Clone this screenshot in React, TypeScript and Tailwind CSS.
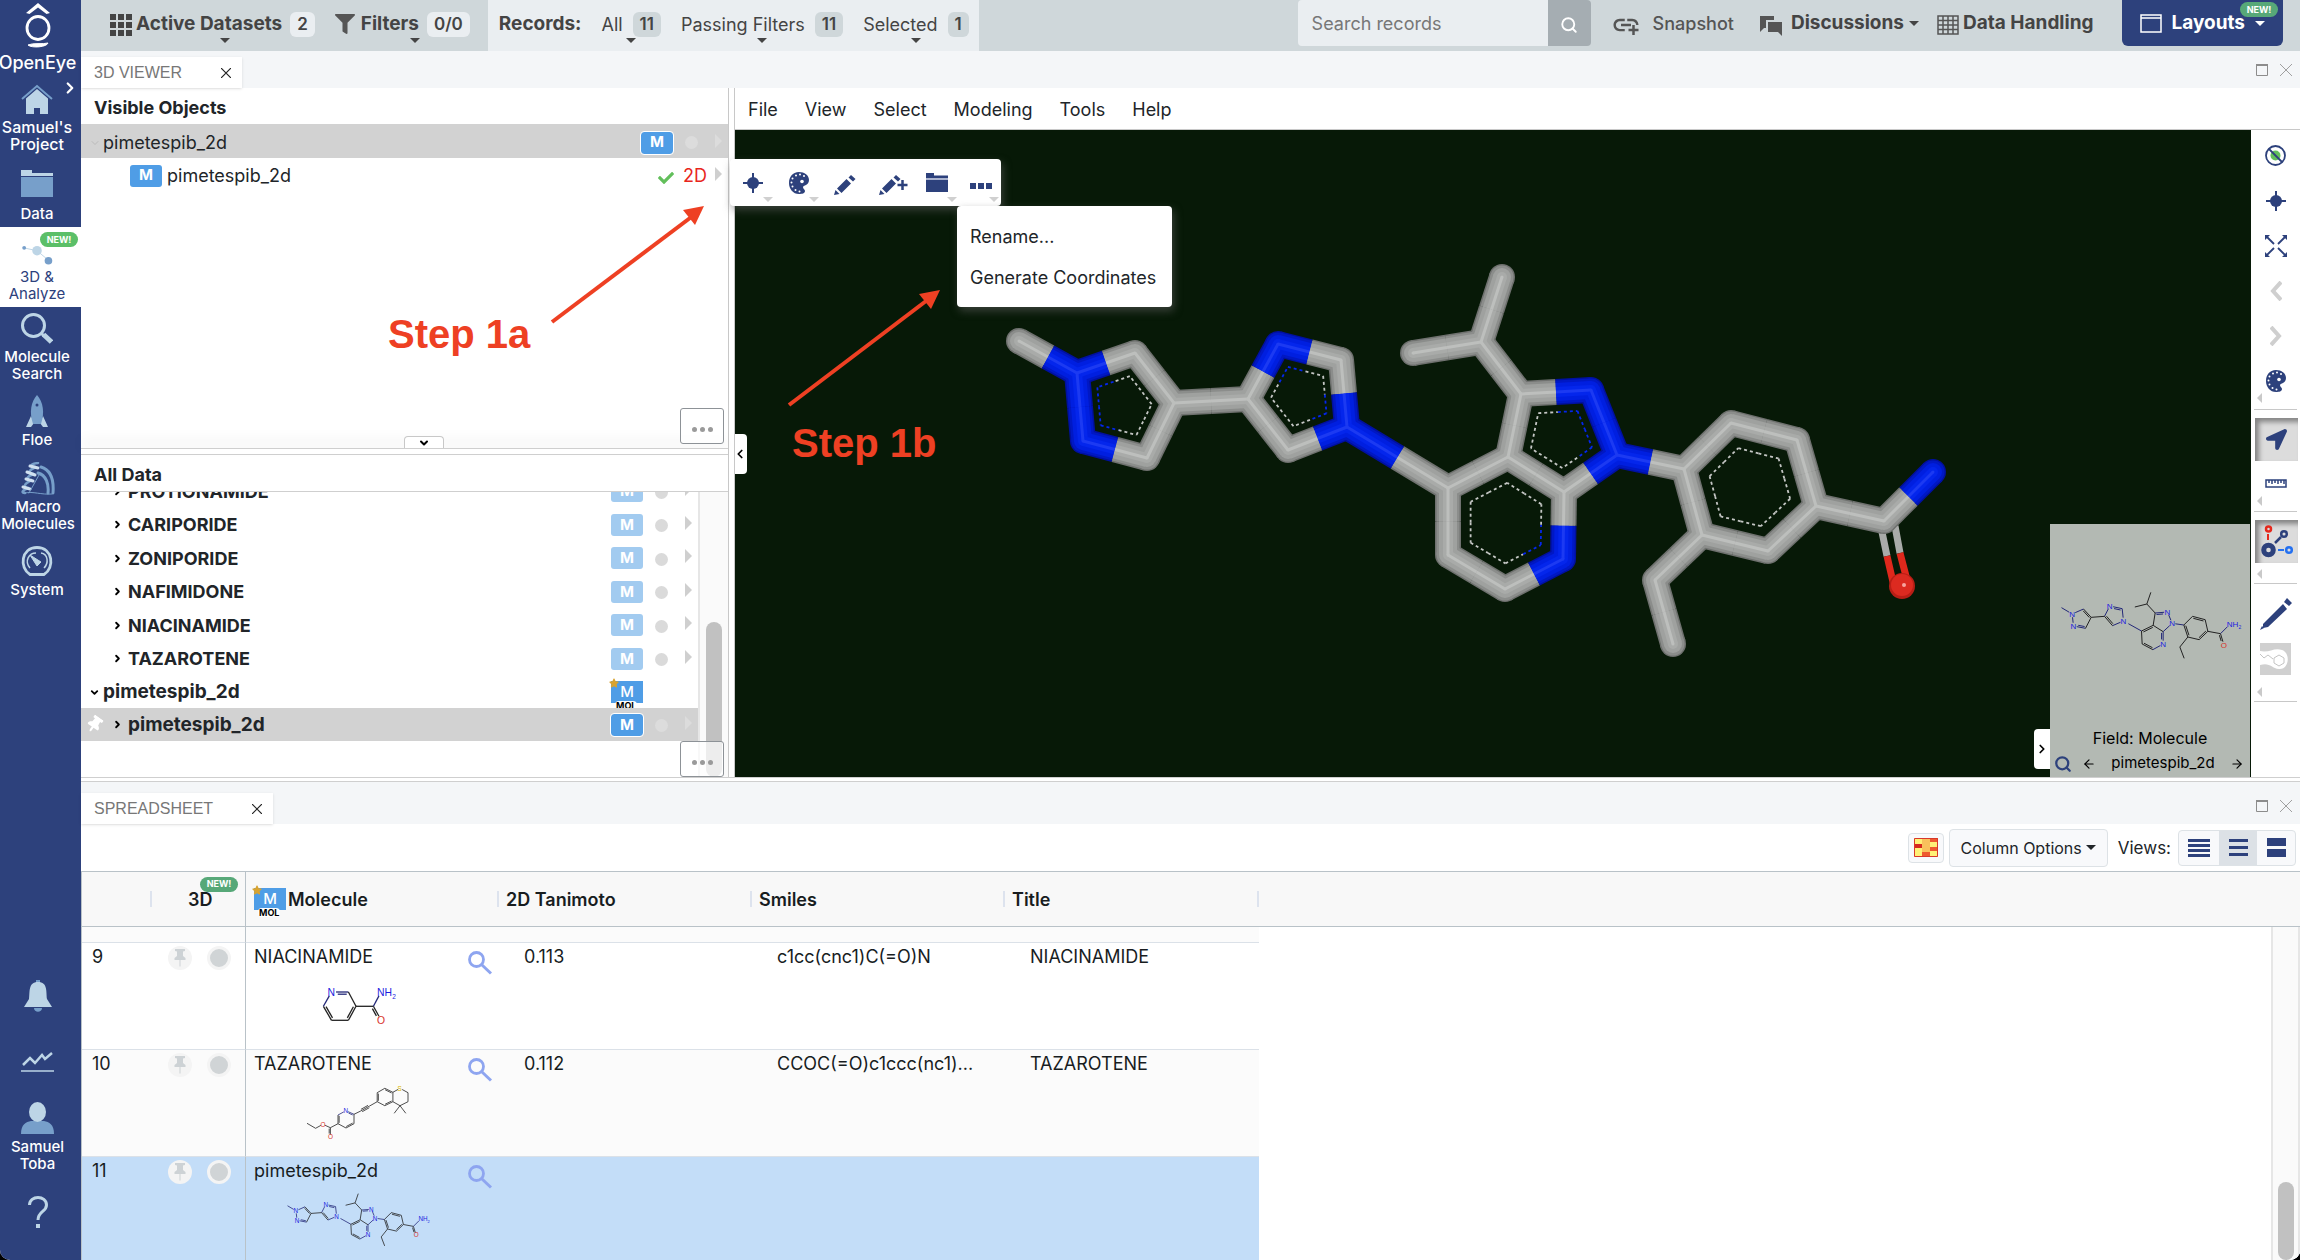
import type { ReactNode } from 'react';
import { ChevronDown, ChevronLeft, ChevronRight, Search, ArrowLeft, ArrowRight } from 'lucide-react';
import { FaCheck, FaFilter, FaLocationArrow, FaStar, FaThumbtack } from 'react-icons/fa';
import { MdAddLink } from 'react-icons/md';

type Atom = [x: number, y: number, label?: string];
type Bond = [from: number, to: number, order?: number];

interface Structure {
  viewBox: string;
  atoms: Atom[];
  bonds: Bond[];
}

const pimetespib: Structure = {
  viewBox: '86 746 548 216',
  atoms: [
    [93, 802], [125, 821, 'N'], [129, 857, 'N'], [165, 864], [182, 831], [159, 806],
    [222, 828], [238, 797, 'N'], [275, 805], [279, 842, 'N'], [246, 856],
    [333, 872], [335, 911], [367, 928], [398, 911, 'N'], [398, 874], [368, 855],
    [374, 818], [411, 815, 'N'], [425, 849, 'N'], [349, 791], [361, 756], [313, 800],
    [460, 854], [486, 828], [524, 838], [532, 873], [506, 898], [472, 890],
    [448, 920], [461, 954], [570, 880], [598, 852, 'NH2'], [580, 913, 'O'],
  ],
  bonds: [
    [0, 1], [1, 2], [2, 3, -2], [3, 4], [4, 5, -2], [5, 1], [4, 6],
    [6, 7], [7, 8, 2], [8, 9], [9, 10], [10, 6, 2], [9, 11],
    [11, 12], [12, 13, -2], [13, 14], [14, 15, -2], [15, 16], [16, 11, -2],
    [16, 17], [17, 18, 2], [18, 19], [19, 15], [17, 20], [20, 21], [20, 22], [19, 23],
    [23, 24], [24, 25, 2], [25, 26], [26, 27, 2], [27, 28], [28, 23, 2],
    [28, 29], [29, 30], [26, 31], [31, 32], [31, 33, 2],
  ],
};

const niacinamide: Structure = {
  viewBox: '318 204 76 44',
  atoms: [
    [329.5, 212, 'N'], [346.4, 212], [354, 226.3], [346.4, 240.3], [329.5, 240.3], [321.4, 226.3],
    [371.4, 226.3], [379, 240, 'O'], [379, 212, 'NH2'],
  ],
  bonds: [[0, 1, 2], [1, 2], [2, 3, 2], [3, 4], [4, 5, 2], [5, 0], [2, 6], [6, 7, 2], [6, 8]],
};

const tazarotene: Structure = {
  viewBox: '304 302 108 61',
  atoms: [
    [307, 343.3], [315.6, 348.3], [322.8, 344.3, 'O'], [330.4, 347.7], [330.4, 357, 'O'],
    [338, 343.7], [338, 335], [346, 330.7, 'N'], [354, 334.3], [354, 343.7], [346, 348],
    [360.7, 331], [369.6, 326], [377.2, 321.7], [377.2, 312.7], [384.8, 308.3],
    [392.9, 312.3], [392.9, 321.7], [384.8, 325.7], [400, 308.3, 'S'], [408, 312.7],
    [408, 321.7], [400, 325.7], [394.2, 333.3], [405.8, 333.3],
  ],
  bonds: [
    [0, 1], [1, 2], [2, 3], [3, 4, 2], [3, 5], [5, 6, 2], [6, 7], [7, 8, 2], [8, 9], [9, 10, 2],
    [10, 5], [8, 11], [11, 12, 3], [12, 13], [13, 14, 2], [14, 15], [15, 16, 2], [16, 17],
    [17, 18, 2], [18, 13], [16, 19], [19, 20], [20, 21], [21, 22], [22, 17], [22, 23], [22, 24],
  ],
};

const labelColor: Record<string, string> = { N: '#1c1ce0', NH2: '#1c1ce0', O: '#d8322a', S: '#d8b400' };

interface StructureViewProps {
  structure: Structure;
  unit: number;
  className: string;
}

// unit is the size of one screen pixel in the structure's own coordinates
function StructureView({ structure, unit, className }: StructureViewProps) {
  const { atoms, bonds, viewBox } = structure;

  return (
    <svg viewBox={viewBox} className={className} aria-hidden="true">
      {bonds.map(([from, to, order = 1]) => {
        const [ax, ay, aLabel] = atoms[from];
        const [bx, by, bLabel] = atoms[to];
        const length = Math.hypot(bx - ax, by - ay);
        const ux = (bx - ax) / length;
        const uy = (by - ay) / length;
        const trimA = aLabel ? length * 0.27 : 0;
        const trimB = bLabel ? length * 0.27 : 0;
        const side = Math.sign(order);
        const offsets = Math.abs(order) === 3 ? [-1, 0, 1] : Math.abs(order) === 2 ? [0, side] : [0];
        const nitrogen = (aLabel && aLabel[0] === 'N') || (bLabel && bLabel[0] === 'N');

        return offsets.map((offset) => {
          const shift = offset * length * 0.13;
          const inset = offset ? length * 0.1 : 0;
          return (
            <line
              key={`${from}-${to}-${offset}`}
              x1={ax + ux * (trimA + inset) - uy * shift}
              y1={ay + uy * (trimA + inset) + ux * shift}
              x2={bx - ux * (trimB + inset) - uy * shift}
              y2={by - uy * (trimB + inset) + ux * shift}
              stroke={nitrogen ? '#232878' : '#222'}
              strokeWidth={unit}
            />
          );
        });
      })}
      {atoms.map(([x, y, label], index) => label && (
        <text
          key={index}
          x={x - unit * 3}
          y={y + unit * 3}
          fill={labelColor[label]}
          fontSize={unit * 8}
          className="font-['Liberation_Sans',Arial,sans-serif]"
        >
          {label[0]}
          {label === 'NH2' && <>H<tspan fontSize={unit * 5} dy={unit * 2}>2</tspan></>}
        </text>
      ))}
    </svg>
  );
}

// Stick model, x / y / element
const sticks: [number, number, string][] = [
  [1019, 341, 'C'], [1077, 373, 'N'], [1083, 441, 'N'], [1147, 458, 'C'], [1174, 403, 'C'], [1135, 353, 'C'],
  [1248, 399, 'C'], [1278, 344, 'N'], [1341, 360, 'C'], [1347, 427, 'N'], [1288, 450, 'C'],
  [1448, 488, 'C'], [1448, 555, 'C'], [1505, 589, 'C'], [1563, 559, 'N'], [1564, 492, 'C'], [1508, 457, 'C'],
  [1521, 394, 'C'], [1591, 390, 'N'], [1617, 455, 'N'], [1481, 342, 'C'], [1502, 277, 'C'], [1413, 353, 'C'],
  [1684, 469, 'C'], [1731, 423, 'C'], [1797, 440, 'C'], [1816, 506, 'C'], [1768, 551, 'C'], [1702, 535, 'C'],
  [1655, 580, 'C'], [1673, 644, 'C'], [1884, 521, 'C'], [1933, 472, 'N'],
];

const stickBonds: [number, number][] = [
  [0, 1], [1, 2], [2, 3], [3, 4], [4, 5], [5, 1], [4, 6], [6, 7], [7, 8], [8, 9], [9, 10], [10, 6], [9, 11],
  [11, 12], [12, 13], [13, 14], [14, 15], [15, 16], [16, 11], [16, 17], [17, 18], [18, 19], [19, 15],
  [17, 20], [20, 21], [20, 22], [19, 23], [23, 24], [24, 25], [25, 26], [26, 27], [27, 28], [28, 23],
  [28, 29], [29, 30], [26, 31], [31, 32],
];

const rings = [[1, 2, 3, 4, 5], [6, 7, 8, 9, 10], [11, 12, 13, 14, 15, 16], [15, 16, 17, 18, 19], [23, 24, 25, 26, 27, 28]];

const stickLayers = [
  { width: 26, C: '#6f716f', N: '#0010a0' },
  { width: 23, C: '#8b8d8b', N: '#0018c4' },
  { width: 18, C: '#9fa19f', N: '#001fe0' },
  { width: 10, C: '#a9aba9', N: '#0426ec' },
  { width: 3, C: '#bdbfbd', N: '#1c3af2' },
];

function StickModel() {
  return (
    <svg viewBox="735 130 1516 647" className="h-full w-full" aria-hidden="true">
      <g strokeWidth="7" stroke="#a9aba9">
        <path d="M1882 532 1887 556M1895 526 1900 553" />
        <path d="M1887 556 1893 582M1900 553 1907 580" stroke="#e0281c" />
      </g>
      {stickLayers.map((layer) => (
        <g key={layer.width} strokeWidth={layer.width}>
          {stickBonds.map(([from, to]) => {
            const [ax, ay, a] = sticks[from];
            const [bx, by, b] = sticks[to];
            const mx = (ax + bx) / 2;
            const my = (ay + by) / 2;
            return (
              <g key={`${from}-${to}`}>
                <line x1={ax} y1={ay} x2={mx} y2={my} stroke={a === 'N' ? layer.N : layer.C} />
                <line x1={bx} y1={by} x2={mx} y2={my} stroke={b === 'N' ? layer.N : layer.C} />
              </g>
            );
          })}
          {sticks.map(([x, y, element], index) => (
            <circle key={index} cx={x} cy={y} r={layer.width / 2} strokeWidth="0" fill={element === 'N' ? layer.N : layer.C} />
          ))}
        </g>
      ))}
      {rings.map((ring) => {
        const cx = ring.reduce((sum, i) => sum + sticks[i][0], 0) / ring.length;
        const cy = ring.reduce((sum, i) => sum + sticks[i][1], 0) / ring.length;
        const scale = ring.length === 5 ? 0.56 : 0.61;
        const points = ring.map((i) => [cx + (sticks[i][0] - cx) * scale, cy + (sticks[i][1] - cy) * scale]);
        return points.map(([x, y], k) => {
          const [nx, ny] = points[(k + 1) % points.length];
          const mx = (x + nx) / 2;
          const my = (y + ny) / 2;
          const next = ring[(k + 1) % ring.length];
          return (
            <g key={`${ring[0]}-${k}`} strokeWidth="1.800" strokeDasharray="3 3">
              <line x1={x} y1={y} x2={mx} y2={my} stroke={sticks[ring[k]][2] === 'N' ? '#0426ec' : '#c4c6c4'} />
              <line x1={mx} y1={my} x2={nx} y2={ny} stroke={sticks[next][2] === 'N' ? '#0426ec' : '#c4c6c4'} />
            </g>
          );
        });
      })}
      <circle cx="1902" cy="586" r="13" fill="#b81e16" />
      <circle cx="1902" cy="585" r="11" fill="#dc2a20" />
      <circle cx="1904" cy="585" r="2" fill="#f7a49e" />
    </svg>
  );
}

function PaletteIcon() {
  return (
    <svg viewBox="0 0 22 22" className="size-[22px]" fill="#2d417c">
      <path d="M11 0C4.500 0 1 5 1 11s4 11 10 11c3 0 6-.6 6-3 0-1.600-2-2.200-2-3.800 0-2 6-1.700 6-7.200C21 3 16.500 0 11 0Z" />
      <g fill="#fff">
        <circle cx="14" cy="9.500" r="1.800" />
        <circle cx="8" cy="3.500" r="1" />
        <circle cx="12" cy="2.500" r="1" />
        <circle cx="16" cy="4" r="1" />
        <circle cx="4.500" cy="6.500" r="1" />
        <circle cx="3.500" cy="10.500" r="1" />
        <circle cx="4.500" cy="14.500" r="1" />
        <circle cx="7.500" cy="18" r="1" />
        <circle cx="11.500" cy="19.500" r="1" />
      </g>
    </svg>
  );
}

function TargetIcon() {
  return (
    <svg viewBox="0 0 20 20" className="size-5" fill="#2d417c">
      <circle cx="10" cy="10" r="6" />
      <path d="M10 0v20M0 10h20" stroke="#2d417c" strokeWidth="2" />
    </svg>
  );
}

function PencilIcon({ plus = false }: { plus?: boolean }) {
  return (
    <svg viewBox={plus ? '-4 -4 33 26' : '-2 -4 26 26'} className={plus ? 'h-[26px] w-[33px]' : 'size-[26px]'} fill="#2d417c">
      <path d="M0 21 1.500 16 5.500 20ZM3 14.500 12.500 5 17 9.500 7.500 19ZM14.500 3.500 17 1 21.500 5 19 7.500Z" />
      {plus && <path d="M23.500 6v10M18.500 11h10" stroke="#2d417c" strokeWidth="2.500" />}
    </svg>
  );
}

function FolderIcon() {
  return (
    <svg viewBox="0 0 22 19" className="h-[19px] w-[22px]" fill="#2d417c">
      <path d="M0 0h8v2.500h14V5H0ZM0 7h22v12H0Z" />
      <path d="M0 5h22v2H0Z" fill="#aab3cf" />
    </svg>
  );
}

function LensIcon() {
  return (
    <svg viewBox="0 0 24 24" className="mt-2 size-6 shrink-0" fill="none" stroke="#8ea5f0">
      <circle cx="8.500" cy="8.500" r="7" strokeWidth="2.800" />
      <path d="M13.500 13.500 23 22.500" strokeWidth="3" />
    </svg>
  );
}

function PinIcon() {
  return (
    <svg viewBox="0 0 12 18" className="h-[18px] w-3" fill="#cdd2d5">
      <path d="M1 0H11V2L9 2.500V7L11.500 9V11H6.500V17L6 18 5.500 17V11H.5V9L3 7V2.500L1 2Z" />
    </svg>
  );
}

function SpinDown({ className }: { className: string }) {
  return (
    <svg viewBox="0 0 10 5" className={`h-[5px] w-[10px] ${className}`} fill="currentColor">
      <path d="M0 0h10L5 5Z" />
    </svg>
  );
}

function NewBadge({ className }: { className: string }) {
  return (
    <span className={`flex h-[15px] w-[38px] items-center justify-center rounded-full text-[9px] font-bold text-white ${className}`}>
      NEW!
    </span>
  );
}

function MBadge({ tone = 'bg-[#4f9de6]', outlined = false }: { tone?: string; outlined?: boolean }) {
  return (
    <span
      className={`flex h-[22px] w-8 shrink-0 items-center justify-center rounded-[3px] text-[15px] font-bold text-white ${tone} ${
        outlined ? 'outline outline-white' : ''
      }`}
    >
      M
    </span>
  );
}

function MolBadge() {
  return (
    <span className="relative flex h-[22px] w-8 shrink-0 items-center justify-center bg-[#4f9de6] text-[15px] font-medium text-white">
      M
      <FaStar className="absolute -left-[2px] -top-[3px] size-[10px] text-[#d9a32f]" />
      <span className="absolute -bottom-[7px] left-1 rounded-sm bg-white px-[1px] text-[9px] font-bold leading-[9px] text-black">MOL</span>
    </span>
  );
}

function RowArrow({ className }: { className: string }) {
  return (
    <svg viewBox="0 0 7 14" className={`mb-1 h-[14px] w-[7px] ${className}`} fill="currentColor">
      <path d="M0 0 7 7 0 14Z" />
    </svg>
  );
}

interface NavItemProps {
  icon: ReactNode;
  lines?: string[];
  label: string;
  className: string;
}

function NavItem({ icon, lines = [], label, className }: NavItemProps) {
  return (
    <a href="#" aria-label={label} className={`relative flex flex-col items-center text-center leading-[17px] ${className}`}>
      {icon}
      {lines.map((line) => <span key={line}>{line}</span>)}
    </a>
  );
}

function Sidebar() {
  return (
    <nav className="flex w-[81px] shrink-0 flex-col bg-[#2d417c] text-[15px] font-medium text-white">
      <a href="#" className="flex flex-col items-center pr-[6px] pt-[3px] text-[18px] leading-[22px]">
        <svg viewBox="0 0 26 45" className="mb-1 h-[45px] w-[26px]" fill="none" stroke="#fff">
          <path d="M1 10 13 0 25 10 21.500 11 13 4.500 4.500 11Z" fill="#fff" stroke="none" />
          <ellipse cx="13" cy="25" rx="11" ry="11.500" strokeWidth="2.800" />
          <path d="M3 42C8 39.500 18 41.500 23 40 22 44 7 45.500 3 42Z" fill="#fff" />
        </svg>
        OpenEye
      </a>
      <NavItem
        label="Samuel's Project"
        className="pr-[7px] pt-[10px] text-[16px]"
        lines={["Samuel's", 'Project']}
        icon={
          <>
            <svg viewBox="0 0 32 30" className="mb-[5px] h-[30px] w-8">
              <path d="M5 14.500 16 5 27 14.500V30H19V24H13V30H5Z" fill="#bdd5e6" />
              <path d="M1 15 16 2 31 15" fill="none" stroke="#779fca" strokeWidth="2" />
            </svg>
            <ChevronRight className="absolute right-[2px] top-[5px] size-[18px]" strokeWidth={3} />
          </>
        }
      />
      <NavItem
        label="Data"
        className="pb-[5px] pr-[7px] pt-[17px]"
        lines={['Data']}
        icon={
          <svg viewBox="0 0 32 27" className="mb-2 h-[27px] w-8">
            <path d="M0 0H11V3H32V6H0Z" fill="#bdd5e6" />
            <path d="M0 7H32V27H0Z" fill="#779fca" />
          </svg>
        }
      />
      <NavItem
        label="3D & Analyze"
        className="bg-white pb-[5px] pr-[7px] pt-[18px] font-normal text-[#2d417c]"
        lines={['3D &', 'Analyze']}
        icon={
          <>
            <svg viewBox="0 0 33 21" className="mb-[3px] h-[20px] w-[33px]">
              <path d="M2 3 16 6 28 16" fill="none" stroke="#bdd5e6" />
              <circle cx="2.500" cy="3" r="2" fill="#779fca" />
              <circle cx="16" cy="6" r="5" fill="#bdd5e6" />
              <circle cx="28" cy="16.500" r="4" fill="#779fca" />
            </svg>
            <NewBadge className="absolute right-[3px] top-[5px] bg-[#5bbf68]" />
          </>
        }
      />
      <NavItem
        label="Molecule Search"
        className="pr-[7px] pt-[6px]"
        lines={['Molecule', 'Search']}
        icon={
          <svg viewBox="0 0 32 31" className="mb-1 h-[31px] w-8" fill="none" stroke="#bdd5e6">
            <circle cx="12.500" cy="12.500" r="11" strokeWidth="3" />
            <path d="M20 20 23 23" strokeWidth="3" />
            <path d="M22.500 21.500 30.500 29" strokeWidth="5" />
          </svg>
        }
      />
      <NavItem
        label="Floe"
        className="pr-[7px] pt-[13px]"
        lines={['Floe']}
        icon={
          <svg viewBox="0 0 22 32" className="mb-1 h-8 w-[22px]">
            <path d="M5 21 0 32H5L8 28ZM17 21 22 32H17L14 28Z" fill="#bdd5e6" />
            <path d="M11 0C17 7 19 17 15 29H7C3 17 5 7 11 0Z" fill="#779fca" />
            <circle cx="11" cy="10" r="1.500" fill="#2d417c" />
          </svg>
        }
      />
      <NavItem
        label="Macro Molecules"
        className="pr-[5px] pt-[14px]"
        lines={['Macro', 'Molecules']}
        icon={
          <svg viewBox="0 0 34 33" className="mb-[3px] h-[33px] w-[34px]" fill="none" strokeLinecap="round">
            <path d="M17 1C8 2 9 5 15 5 6 9 7 12 13 12 4 15 5 19 11 18 2 22 2 26 8 26 1 28 0 31 4 31" stroke="#779fca" strokeWidth="2.500" />
            <path d="M9 4 17 6M6 10 14 13M5 17 12 19M2 25 9 27" stroke="#cfe0f0" strokeWidth="3" />
            <path d="M20 5C30 8 33 18 32 31M17 11C25 13 28 22 27 31" stroke="#779fca" strokeWidth="3" />
            <path d="M4 31C12 29 20 33 31 32M8 31 18 13" stroke="#779fca" />
          </svg>
        }
      />
      <NavItem
        label="System"
        className="pr-[7px] pt-[14px]"
        lines={['System']}
        icon={
          <svg viewBox="0 0 32 30" className="mb-[5px] h-[30px] w-8" fill="none" stroke="#bdd5e6">
            <path d="M9 28.500C-2 22 0 1.500 16 1.500S34 22 23 28.500Z" strokeWidth="2.800" />
            <path d="M9 22C3 15 8 7 15 7M23 22C28 17 27 8 20 7" strokeWidth="1.500" />
            <path d="M9 9 20 16 16 20Z" fill="#bdd5e6" />
          </svg>
        }
      />
      <div className="mt-auto flex flex-col pb-8 pr-[6px]">
        <NavItem
          label="Notifications"
          className=""
          icon={
            <svg viewBox="0 0 28 32" className="h-8 w-7">
              <path d="M12 0H16V4H12ZM10 28H18C18 33 10 33 10 28Z" fill="#779fca" />
              <path d="M14 2C24 2 22 12 23 19L28 27H0L5 19C6 12 4 2 14 2Z" fill="#bdd5e6" />
            </svg>
          }
        />
        <NavItem
          label="Activity"
          className="pt-10"
          icon={
            <svg viewBox="0 0 33 20" className="h-5 w-[33px]" fill="none" stroke="#bdd5e6">
              <path d="M2 13 9 6 14 11 21 3 24 7 31 1" strokeWidth="2.500" />
              <path d="M0 19H33" strokeWidth="1.500" />
            </svg>
          }
        />
        <NavItem
          label="Account"
          className="pt-[30px]"
          lines={['Samuel', 'Toba']}
          icon={
            <svg viewBox="0 0 33 32" className="mb-1 h-8 w-[33px]">
              <path d="M0 32C0 22 5 20 10 19H23C28 20 33 22 33 32Z" fill="#779fca" />
              <ellipse cx="16.500" cy="10" rx="8.500" ry="10" fill="#bdd5e6" />
            </svg>
          }
        />
        <NavItem
          label="Help"
          className="pt-6"
          icon={
            <svg viewBox="0 0 20 32" className="h-8 w-5" fill="none" stroke="#bdd5e6" strokeWidth="3">
              <path d="M1.500 9C1.500-1 18.500-1 18.500 9 18.500 16 10 15 10 24" />
              <path d="M10 28V32" strokeWidth="4" />
            </svg>
          }
        />
      </div>
    </nav>
  );
}

function CountButton({ label, count, bold = false, tone }: { label: string; count: string; bold?: boolean; tone: string }) {
  return (
    <button type="button" className={`relative flex h-[51px] items-center pb-[3px] ${bold ? 'gap-2' : 'gap-[10px]'}`}>
      <span className={bold ? 'text-[19px] font-bold' : ''}>{label}</span>
      <span className={`rounded-md px-[7px] text-[17px] font-semibold leading-[25px] ${tone}`}>{count}</span>
      <SpinDown className="absolute bottom-[8px] left-1/2 -ml-[5px]" />
    </button>
  );
}

function TopBar() {
  return (
    <header className="flex h-[51px] shrink-0 bg-[#cfd7da] text-[#444]">
      <div className="flex items-center pl-[29px] pr-[18px]">
        <svg viewBox="0 0 22 22" className="mb-[2px] mr-1 size-[22px]" fill="#444">
          <path d="M0 0h6v6H0ZM8 0h6v6H8ZM16 0h6v6H16ZM0 8h6v6H0ZM8 8h6v6H8ZM16 8h6v6H16ZM0 16h6v6H0ZM8 16h6v6H8ZM16 16h6v6H16Z" />
        </svg>
        <CountButton label="Active Datasets" count="2" bold tone="bg-[#eaeef1]" />
        <FaFilter className="mb-[3px] ml-5 mr-[6px] size-[20px] text-[#555]" />
        <CountButton label="Filters" count="0/0" bold tone="bg-[#eaeef1]" />
      </div>
      <div className="flex items-center gap-[20px] bg-[#eaeef1] pl-[11px] pr-[10px]">
        <span className="pb-[3px] text-[19px] font-bold">Records:</span>
        <CountButton label="All" count="11" tone="bg-[#cfd7da]" />
        <CountButton label="Passing Filters" count="11" tone="bg-[#cfd7da]" />
        <CountButton label="Selected" count="1" tone="bg-[#cfd7da]" />
      </div>
      <div className="ml-auto flex h-[46px] items-center pr-[17px]">
        <input
          type="text"
          aria-label="Search records"
          placeholder="Search records"
          className="h-full w-[250px] rounded-l bg-[#eaeef1] px-[14px] placeholder:text-[#777]"
        />
        <button type="button" aria-label="Search" className="flex h-full w-[43px] items-center justify-center rounded-r bg-[#a5adb2] text-white">
          <Search className="mt-1 size-[18px]" strokeWidth={2.5} />
        </button>
        <button type="button" className="ml-[20px] flex items-center gap-3 font-medium text-[#555]">
          <MdAddLink className="mt-1 size-[30px]" />
          Snapshot
        </button>
        <button type="button" className="ml-[26px] flex items-center gap-[9px] text-[19px] font-bold">
          <svg viewBox="0 0 22 21" className="mt-1 h-[21px] w-[22px]" fill="#555">
            <path d="M0 1H14V5H6V13H4L0 17Z" />
            <path d="M8 7H22V21L18 17H8Z" />
          </svg>
          Discussions
          <SpinDown className="-ml-1" />
        </button>
        <button type="button" className="ml-[18px] flex items-center gap-[4px] text-[19px] font-bold">
          <svg viewBox="0 0 22 20" className="mt-[3px] h-5 w-[22px]" fill="none" stroke="#555" strokeWidth="1.500">
            <path d="M1 1H21V19H1ZM1 5.500H21M1 10H21M1 14.500H21M6 1V19M11 1V19M16 1V19" />
          </svg>
          Data Handling
        </button>
        <button type="button" className="relative ml-[28px] flex h-full items-center gap-[10px] rounded-b-md bg-[#2d417c] px-[18px] text-[19px] font-bold text-white">
          <svg viewBox="0 0 22 19" className="h-[19px] w-[22px]" fill="none" stroke="#fff" strokeWidth="1.500">
            <path d="M1 1H21V18H1ZM1 4H21" />
          </svg>
          Layouts
          <SpinDown className="" />
          <NewBadge className="absolute right-[5px] top-[2px] bg-[#57a878]" />
        </button>
      </div>
    </header>
  );
}

function PanelTabs({ title, className, tabClass }: { title: string; className: string; tabClass: string }) {
  return (
    <div className={`flex shrink-0 items-end bg-[#f4f6f8] font-['Liberation_Sans',Arial,sans-serif] ${className}`}>
      <div className={`flex h-[31px] items-center justify-between bg-white pl-[13px] pr-[11px] text-[16px] text-[#777] shadow-sm ${tabClass}`}>
        {title}
        <button type="button" aria-label={`Close ${title}`}>
          <svg viewBox="0 0 10 10" className="size-[10px]" stroke="#222" strokeWidth="1.200">
            <path d="M0 0 10 10M10 0 0 10" />
          </svg>
        </button>
      </div>
      <div className="mb-3 ml-auto flex gap-3 pr-2">
        <button type="button" aria-label="Maximize">
          <svg viewBox="0 0 12 12" className="size-3" fill="none" stroke="#8c8c8c">
            <path d="M.5 1H11.500V11.500H.5Z" />
            <path d="M0 1H12" strokeWidth="2" />
          </svg>
        </button>
        <button type="button" aria-label="Close panel">
          <svg viewBox="0 0 12 12" className="size-3" stroke="#a0a0a0">
            <path d="M0 0 12 12M12 0 0 12" />
          </svg>
        </button>
      </div>
    </div>
  );
}

function MoreButton({ className }: { className: string }) {
  return (
    <button
      type="button"
      aria-label="More"
      className={`absolute right-1 flex h-[36px] w-[44px] items-center justify-center gap-[3px] rounded-[3px] border border-[#8d9297] bg-white/70 pt-[6px] ${className}`}
    >
      <span className="size-[5px] rounded-full bg-[#9a9a9a]" />
      <span className="size-[5px] rounded-full bg-[#9a9a9a]" />
      <span className="size-[5px] rounded-full bg-[#9a9a9a]" />
    </button>
  );
}

const listedMolecules = ['PROTIONAMIDE', 'CARIPORIDE', 'ZONIPORIDE', 'NAFIMIDONE', 'NIACINAMIDE', 'TAZAROTENE'];

function DataTree() {
  return (
    <aside className="flex w-[648px] shrink-0 flex-col border-r border-[#c8c8c8] text-[#212529]">
      <section className="relative min-h-0 flex-[360]">
        <h2 className="h-9 pl-[13px] pt-[2px] font-bold leading-9">Visible Objects</h2>
        <div className="flex h-[34px] items-center bg-[#d2d2d2] pl-2 pr-[6px] pt-[3px]">
          <ChevronDown className="size-3 text-[#bbb]" />
          <span className="ml-[2px]">pimetespib_2d</span>
          <span className="ml-auto"><MBadge outlined /></span>
          <span className="ml-3 size-[13px] rounded-full bg-[#dcdcdc]" />
          <RowArrow className="ml-[17px] text-[#dcdcdc]" />
        </div>
        <div className="flex h-[34px] items-center pl-[49px] pr-[6px] pt-px">
          <MBadge />
          <span className="ml-[5px]">pimetespib_2d</span>
          <FaCheck className="ml-auto mt-1 size-4 text-[#62bf5b]" />
          <span className="ml-[9px] text-[#e8261c]">2D</span>
          <RowArrow className="ml-2 text-[#cfcfcf]" />
        </div>
        <MoreButton className="bottom-1" />
        <button
          type="button"
          aria-label="Collapse visible objects"
          className="absolute bottom-0 left-[323px] flex h-3 w-10 items-center justify-center rounded-t border border-b-0 border-[#c8c8c8] bg-white"
        >
          <ChevronDown className="size-3 text-black" strokeWidth={4} />
        </button>
      </section>
      <div className="h-[7px] shrink-0 border-y border-[#cfcfcf] shadow-[0_-8px_14px_rgba(0,0,0,0.06)]" />
      <section className="relative flex min-h-0 flex-[322] flex-col font-bold">
        <h2 className="h-[37px] shrink-0 border-b border-[#cfcfcf] pl-[13px] pt-[2px] leading-9">All Data</h2>
        <div className="flex min-h-0 flex-1 overflow-hidden">
          <ul className="-mt-[19px] grid h-[268px] flex-1 grid-rows-8">
            {listedMolecules.map((name) => (
              <li key={name} className="flex items-center pl-[31px] pr-[6px] pt-[3px]">
                <ChevronRight className="size-[11px] text-black" strokeWidth={4} />
                <span className="ml-[5px]">{name}</span>
                <span className="ml-auto"><MBadge tone="bg-[#a2cbf0]" /></span>
                <span className="ml-3 mt-[2px] size-[13px] rounded-full bg-[#dadada]" />
                <RowArrow className="ml-[17px] text-[#cfcfcf]" />
              </li>
            ))}
            <li className="flex items-center pl-2 pr-[55px] pt-[3px]">
              <ChevronDown className="size-[11px] text-black" strokeWidth={4} />
              <span className="ml-[3px] text-[19px]">pimetespib_2d</span>
              <span className="ml-auto"><MolBadge /></span>
            </li>
            <li className="z-10 flex items-center bg-[#d2d2d2] pl-[5px] pr-[6px] pt-px">
              <FaThumbtack className="size-[17px] rotate-[35deg] text-white" />
              <ChevronRight className="ml-[9px] size-[11px] text-black" strokeWidth={4} />
              <span className="ml-[5px] text-[19px]">pimetespib_2d</span>
              <span className="ml-auto"><MBadge outlined /></span>
              <span className="ml-3 mt-[2px] size-[13px] rounded-full bg-[#dcdcdc]" />
              <RowArrow className="ml-[17px] text-[#dcdcdc]" />
            </li>
          </ul>
          <div className="flex w-[30px] items-end justify-center border-l-2 border-[#e6e6e6] bg-[#fafafa]">
            <div className="h-[155px] w-4 rounded-full bg-[#c1c1c1]" />
          </div>
        </div>
        <MoreButton className="bottom-0" />
      </section>
    </aside>
  );
}

const viewerMenus = ['File', 'View', 'Select', 'Modeling', 'Tools', 'Help'];

function ObjectToolbar() {
  const tools = [
    { name: 'Center', icon: <TargetIcon />, more: true },
    { name: 'Color', icon: <PaletteIcon />, more: true },
    { name: 'Edit', icon: <PencilIcon />, more: false },
    { name: 'Edit copy', icon: <PencilIcon plus />, more: false },
    { name: 'Folder', icon: <FolderIcon />, more: true },
  ];

  return (
    <div className="absolute -left-[5px] top-[29px] z-20">
      <div className="flex h-[47px] w-[271px] rounded bg-white shadow-[2px_4px_8px_rgba(90,90,90,0.6)]">
        {tools.map((tool) => (
          <button key={tool.name} type="button" aria-label={tool.name} className="relative flex w-[46px] items-center justify-center">
            {tool.icon}
            {tool.more && <SpinDown className="absolute bottom-1 right-[3px] text-[#d0d0d0]" />}
          </button>
        ))}
        <button type="button" aria-label="More actions" className="relative flex w-[41px] items-center justify-center gap-[2px] pt-[6px]">
          <span className="size-[6px] bg-[#2d417c]" />
          <span className="size-[6px] bg-[#2d417c]" />
          <span className="size-[6px] bg-[#2d417c]" />
          <SpinDown className="absolute bottom-1 right-[2px] text-[#d0d0d0]" />
        </button>
      </div>
      <div className="ml-[227px] flex h-[101px] w-[215px] flex-col justify-center rounded bg-white pt-px text-[#212529] shadow-[2px_4px_8px_rgba(90,90,90,0.6)]">
        <button type="button" className="h-[41px] pl-[13px] text-left">Rename...</button>
        <button type="button" className="h-[41px] pl-[13px] text-left">Generate Coordinates</button>
      </div>
    </div>
  );
}

function FlyoutMark({ className }: { className: string }) {
  return (
    <svg viewBox="0 0 5 10" className={`absolute left-[6px] h-[10px] w-[5px] ${className}`} fill="#c9c9c9">
      <path d="M5 0V10L0 5Z" />
    </svg>
  );
}

function ViewToolbar() {
  const tool = 'relative flex h-[45px] w-full shrink-0 items-center justify-center';
  const pressed = 'relative ml-1 flex h-[43px] w-[43px] shrink-0 items-center justify-center bg-[#dcdcdc] shadow-[inset_4px_4px_5px_rgba(0,0,0,0.4)]';
  const rule = 'mx-[3px] h-px shrink-0 bg-[#c8c8c8]';

  return (
    <div className="flex w-[49px] shrink-0 flex-col bg-white pt-[3px]">
      <button type="button" aria-label="Toggle visibility" className={tool}>
        <svg viewBox="0 0 21 21" className="size-[21px]" fill="none" stroke="#2d417c" strokeWidth="1.800">
          <circle cx="10.500" cy="10.500" r="5" fill="#62bf5b" stroke="none" />
          <circle cx="10.500" cy="10.500" r="9.500" />
          <path d="M4 4 17 17" />
        </svg>
      </button>
      <button type="button" aria-label="Center view" className={tool}><TargetIcon /></button>
      <button type="button" aria-label="Fit view" className={tool}>
        <svg viewBox="0 0 22 22" className="size-[22px]" stroke="#2d417c" strokeWidth="1.800" fill="#2d417c">
          <path d="M9 9 1 1M13 9 21 1M9 13 1 21M13 13 21 21" />
          <path d="M0 0H5L0 5ZM22 0H17L22 5ZM0 22H5L0 17ZM22 22H17L22 17Z" stroke="none" />
        </svg>
      </button>
      <button type="button" aria-label="Previous" className={tool}>
        <svg viewBox="0 0 12 20" className="h-5 w-3" fill="none" stroke="#cfcfcf" strokeWidth="4"><path d="M11 1 3 10 11 19" /></svg>
      </button>
      <button type="button" aria-label="Next" className={tool}>
        <svg viewBox="0 0 12 20" className="h-5 w-3" fill="none" stroke="#cfcfcf" strokeWidth="4"><path d="M1 1 9 10 1 19" /></svg>
      </button>
      <button type="button" aria-label="Color" className={tool}>
        <PaletteIcon />
        <FlyoutMark className="bottom-0" />
      </button>
      <div className={`mt-[6px] ${rule}`} />
      <button type="button" aria-label="Select" className={`mt-2 ${pressed}`}>
        <FaLocationArrow className="size-[21px] text-[#2d417c]" />
      </button>
      <button type="button" aria-label="Measure" className={tool}>
        <svg viewBox="0 0 22 9" className="h-[9px] w-[22px]" fill="none" stroke="#2d417c" strokeWidth="1.500">
          <path d="M1 1H21V8H1ZM4 1V4M7 1V5M10 1V4M13 1V5M16 1V4M19 1V5" />
        </svg>
        <FlyoutMark className="bottom-0" />
      </button>
      <div className={`mt-[5px] ${rule}`} />
      <button type="button" aria-label="Atom style" className={`mt-2 ${pressed}`}>
        <svg viewBox="0 0 32 33" className="h-[33px] w-8" fill="none" strokeWidth="2.500">
          <path d="M7 9V15" stroke="#e5281c" strokeWidth="2" />
          <circle cx="7.500" cy="4" r="2.500" stroke="#e5281c" />
          <path d="M14 18 20 12" stroke="#2d417c" />
          <circle cx="23" cy="9" r="2.800" stroke="#2d417c" />
          <circle cx="7.500" cy="25" r="4.800" stroke="#2d417c" strokeWidth="5" />
          <path d="M17 25H23" stroke="#2470f0" strokeWidth="2" />
          <circle cx="28" cy="25" r="2.800" stroke="#2470f0" />
        </svg>
      </button>
      <div className="relative h-5 shrink-0"><FlyoutMark className="top-[6px]" /></div>
      <div className={rule} />
      <button type="button" aria-label="Sketch" className={`mt-[7px] ${tool}`}>
        <svg viewBox="0 0 32 32" className="size-8" fill="#2d417c">
          <path d="M0 32 2 28 4 30ZM3 26 23 6 27 11 8 29 3 30ZM24 4 27 0 32 5 29 8Z" />
        </svg>
      </button>
      <button type="button" aria-label="Pocket" className={tool}>
        <svg viewBox="0 0 31 32" className="h-8 w-[31px]">
          <path d="M0 0H31V32H0Z" fill="#d0d0d0" />
          <path d="M0 8C10 10 14 4 22 7 31 10 29 27 19 26 11 25 10 19 0 22Z" fill="#fff" />
          <path d="M0 11 4 15 8 12 13 16M19 12 24 15V20L19 23 14 20V15Z" fill="none" stroke="#c4c4c4" />
        </svg>
      </button>
      <div className="relative h-5 shrink-0"><FlyoutMark className="top-[6px]" /></div>
      <div className={rule} />
    </div>
  );
}

function Viewer() {
  return (
    <div className="ml-[5px] flex min-w-0 flex-1 flex-col border-l border-[#c8c8c8]">
      <div className="flex h-[42px] shrink-0 items-center gap-[27px] border-b border-[#c8c8c8] pl-[13px] pt-[2px] text-[#212529]">
        {viewerMenus.map((menu) => <button key={menu} type="button">{menu}</button>)}
      </div>
      <div className="flex min-h-0 flex-1">
        <div className="relative min-w-0 flex-1 bg-[#071907]">
          <StickModel />
          <ObjectToolbar />
          <button type="button" aria-label="Collapse left" className="absolute left-0 top-[304px] flex h-10 w-3 items-center rounded-r bg-white">
            <ChevronLeft className="-ml-[2px] size-[14px] text-black" strokeWidth={3} />
          </button>
          <div className="absolute bottom-0 right-px flex items-end">
            <button type="button" aria-label="Collapse preview" className="mb-2 flex h-10 w-4 items-center justify-center rounded-l bg-white">
              <ChevronRight className="size-[14px] text-black" strokeWidth={3} />
            </button>
            <div className="flex h-[253px] w-[200px] flex-col items-center bg-[#b3b9b3] text-black">
              <StructureView structure={pimetespib} unit={3} className="mt-[65px] h-[72px] w-[183px]" />
              <p className="mt-auto text-[16px] leading-6">Field: Molecule</p>
              <div className="flex h-[27px] w-full items-center pl-1 pr-[6px] text-[15px]">
                <Search className="size-[18px] text-[#2d417c]" strokeWidth={3} />
                <button type="button" aria-label="Previous field" className="ml-[10px]"><ArrowLeft className="size-[14px]" /></button>
                <span className="mx-auto">pimetespib_2d</span>
                <button type="button" aria-label="Next field"><ArrowRight className="size-[14px]" /></button>
              </div>
            </div>
          </div>
          <div className="absolute left-[57px] top-[290px] font-['Liberation_Sans',Arial,sans-serif] text-[40px] font-bold leading-[46px] text-[#ee4023]">
            Step 1b
          </div>
          <svg viewBox="0 0 160 124" className="absolute left-[50px] top-[156px] h-[124px] w-[160px]" fill="#ee4023">
            <path d="M4 119 145 12" stroke="#ee4023" strokeWidth="4" />
            <path d="M155 4 134 8 146 23Z" />
          </svg>
        </div>
        <ViewToolbar />
      </div>
    </div>
  );
}

interface SheetRow {
  index: number;
  name: string;
  structure: Structure;
  unit: number;
  size: string;
  tanimoto?: string;
  smiles?: string;
  title?: string;
  tone: string;
}

const sheetRows: SheetRow[] = [
  { index: 9, name: 'NIACINAMIDE', structure: niacinamide, unit: 1.3, size: 'h-[44px] w-[76px]', tanimoto: '0.113', smiles: 'c1cc(cnc1)C(=O)N', title: 'NIACINAMIDE', tone: 'bg-white' },
  { index: 10, name: 'TAZAROTENE', structure: tazarotene, unit: 0.8, size: 'h-[61px] w-[108px]', tanimoto: '0.112', smiles: 'CCOC(=O)c1ccc(nc1)...', title: 'TAZAROTENE', tone: 'bg-[#fbfbfb]' },
  { index: 11, name: 'pimetespib_2d', structure: pimetespib, unit: 3, size: 'h-[57px] w-[146px]', tone: 'bg-[#c3ddf8]' },
];

const fields = ['2D Tanimoto', 'Smiles', 'Title'];

function Spreadsheet() {
  const head = 'h-14 border-y border-[#b9c2c8] bg-[#f8f8f8] p-0 text-left font-semibold';
  const cell = 'border-b border-[#dbe1e8] p-0 align-top leading-[27px]';
  const handle = <span className="ml-auto h-4 w-[2px] bg-[#dde3ee]" />;

  return (
    <section className="flex min-h-0 flex-[478] flex-col bg-white">
      <PanelTabs title="SPREADSHEET" className="h-[42px]" tabClass="w-[192px]" />
      <div className="flex h-[47px] shrink-0 items-center justify-end gap-[5px] pr-1 text-[16px] text-[#212529]">
        <button type="button" aria-label="Color cells" className="flex h-[30px] w-9 items-center justify-center rounded border border-[#dde2e6] bg-[#f8f9fb]">
          <svg viewBox="0 0 24 19" className="h-[19px] w-6">
            <path d="M0 0H24V19H0Z" fill="#fff176" />
            <path d="M8 0H16V19H8Z" fill="#f9c05c" />
            <path d="M0 6H8V10H0Z" fill="#d6281e" />
            <path d="M16 0H24V4H16ZM16 9H24V13H16ZM8 14H16V19H8Z" fill="#ee5a2e" />
            <path d="M.5.5H23.500V18.500H.5Z" fill="none" stroke="#d8382a" />
          </svg>
        </button>
        <button type="button" className="flex h-[38px] items-center gap-[4px] rounded border border-[#dde2e6] bg-[#f8f9fb] px-[11px]">
          Column Options
          <SpinDown className="h-[4px] w-[8px]" />
        </button>
        <span className="ml-[5px] mr-[2px] pt-[2px] text-[17px]">Views:</span>
        <div className="flex h-9 overflow-hidden rounded border border-[#dde2e6] bg-[#f8f9fb]">
          <button type="button" aria-label="Compact rows" className="flex w-10 items-center justify-center">
            <svg viewBox="0 0 22 18" className="h-[18px] w-[22px]" fill="#2d417c"><path d="M0 0h22v3H0ZM0 5h22v3H0ZM0 10h22v3H0ZM0 15h22v3H0Z" /></svg>
          </button>
          <button type="button" aria-label="Normal rows" className="flex w-[38px] items-center justify-center bg-[#dce1e6]">
            <svg viewBox="0 0 19 17" className="h-[17px] w-[19px]" fill="#2d417c"><path d="M0 0h19v3H0ZM0 7h19v3H0ZM0 14h19v3H0Z" /></svg>
          </button>
          <button type="button" aria-label="Tall rows" className="flex w-[38px] items-center justify-center">
            <svg viewBox="0 0 19 19" className="size-[19px]" fill="#2d417c"><path d="M0 0h19v8H0ZM0 11h19v8H0Z" /></svg>
          </button>
        </div>
      </div>
      <div className="relative min-h-0 flex-1 overflow-hidden border-l border-[#b9c2c8]">
        <table className="w-full table-fixed border-separate border-spacing-0 text-[#181d1f]">
          <colgroup>
            <col className="w-[70px]" />
            <col className="w-[94px]" />
            <col className="w-[253px]" />
            <col className="w-[253px]" />
            <col className="w-[253px]" />
            <col className="w-[254px]" />
            <col />
          </colgroup>
          <thead>
            <tr>
              <th className={head} aria-label="Row"><div className="flex">{handle}</div></th>
              <th className={`border-r ${head}`}>
                <div className="relative pl-[36px]">
                  3D
                  <NewBadge className="absolute -top-[9px] right-[7px] bg-[#57a878]" />
                </div>
              </th>
              <th className={head}>
                <div className="flex items-center gap-[2px] pl-2"><MolBadge />Molecule{handle}</div>
              </th>
              {fields.map((field) => (
                <th key={field} className={head}>
                  <div className="flex items-center pl-[7px]">{field}{handle}</div>
                </th>
              ))}
              <th className={head} aria-label="Empty" />
            </tr>
          </thead>
          <tbody>
            <tr className="bg-[#fbfbfb]">
              <td className={`h-4 ${cell}`} />
              <td className={`border-r border-r-[#b9c2c8] ${cell}`} />
              <td className={cell} colSpan={4} />
              <td className="bg-white p-0" />
            </tr>
            {sheetRows.map((row) => (
              <tr key={row.index} className={row.tone}>
                <td className={`h-[107px] ${cell}`}><div className="pl-[10px]">{row.index}</div></td>
                <td className={`border-r border-r-[#b9c2c8] ${cell}`}>
                  <div className="flex gap-[15px] pl-4 pt-[3px]">
                    <span className="flex size-6 items-center justify-center rounded-full bg-[#f4f4f4]">
                      <PinIcon />
                    </span>
                    <span className="size-6 rounded-full border-[3px] border-[#f4f4f4] bg-[#d0d4d6]" />
                  </div>
                </td>
                <td className={cell}>
                  <div className="flex h-[27px] justify-between pl-2 pr-[7px]">
                    {row.name}
                    <LensIcon />
                  </div>
                  <div className="flex h-[71px] w-[223px] items-center justify-center">
                    <StructureView structure={row.structure} unit={row.unit} className={row.size} />
                  </div>
                </td>
                <td className={cell}><div className="pl-[25px]">{row.tanimoto}</div></td>
                <td className={cell}><div className="pl-[25px]">{row.smiles}</div></td>
                <td className={cell}><div className="pl-[25px]">{row.title}</div></td>
                <td className="bg-white p-0" />
              </tr>
            ))}
          </tbody>
        </table>
        <div className="absolute bottom-0 right-0 top-14 flex w-[29px] items-end justify-center border-l-2 border-r-2 border-[#e6e6e6] bg-[#fafafa]">
          <div className="h-[78px] w-4 rounded-full bg-[#c1c1c1]" />
        </div>
      </div>
    </section>
  );
}

export default function App() {
  return (
    <div className="h-screen bg-black font-[Inter,'Noto_Sans',sans-serif] text-[18px]">
      <div className="flex h-full overflow-hidden rounded-b-[10px] bg-white">
        <Sidebar />
        <div className="flex min-w-0 flex-1 flex-col">
          <TopBar />
          <section className="flex min-h-0 flex-[731] flex-col">
            <PanelTabs title="3D VIEWER" className="h-[37px]" tabClass="w-[161px]" />
            <div className="relative flex min-h-0 flex-1">
              <DataTree />
              <Viewer />
              <div className="absolute left-[307px] top-[223px] font-['Liberation_Sans',Arial,sans-serif] text-[40px] font-bold leading-[46px] text-[#ee4023]">
                Step 1a
              </div>
              <svg viewBox="0 0 160 124" className="absolute left-[467px] top-[114px] h-[124px] w-[160px]" fill="#ee4023">
                <path d="M4 120 146 13" stroke="#ee4023" strokeWidth="4" />
                <path d="M156 4 135 8 147 23Z" />
              </svg>
            </div>
            <div className="h-[5px] shrink-0 border-y border-[#cfcfcf]" />
          </section>
          <Spreadsheet />
        </div>
      </div>
    </div>
  );
}
